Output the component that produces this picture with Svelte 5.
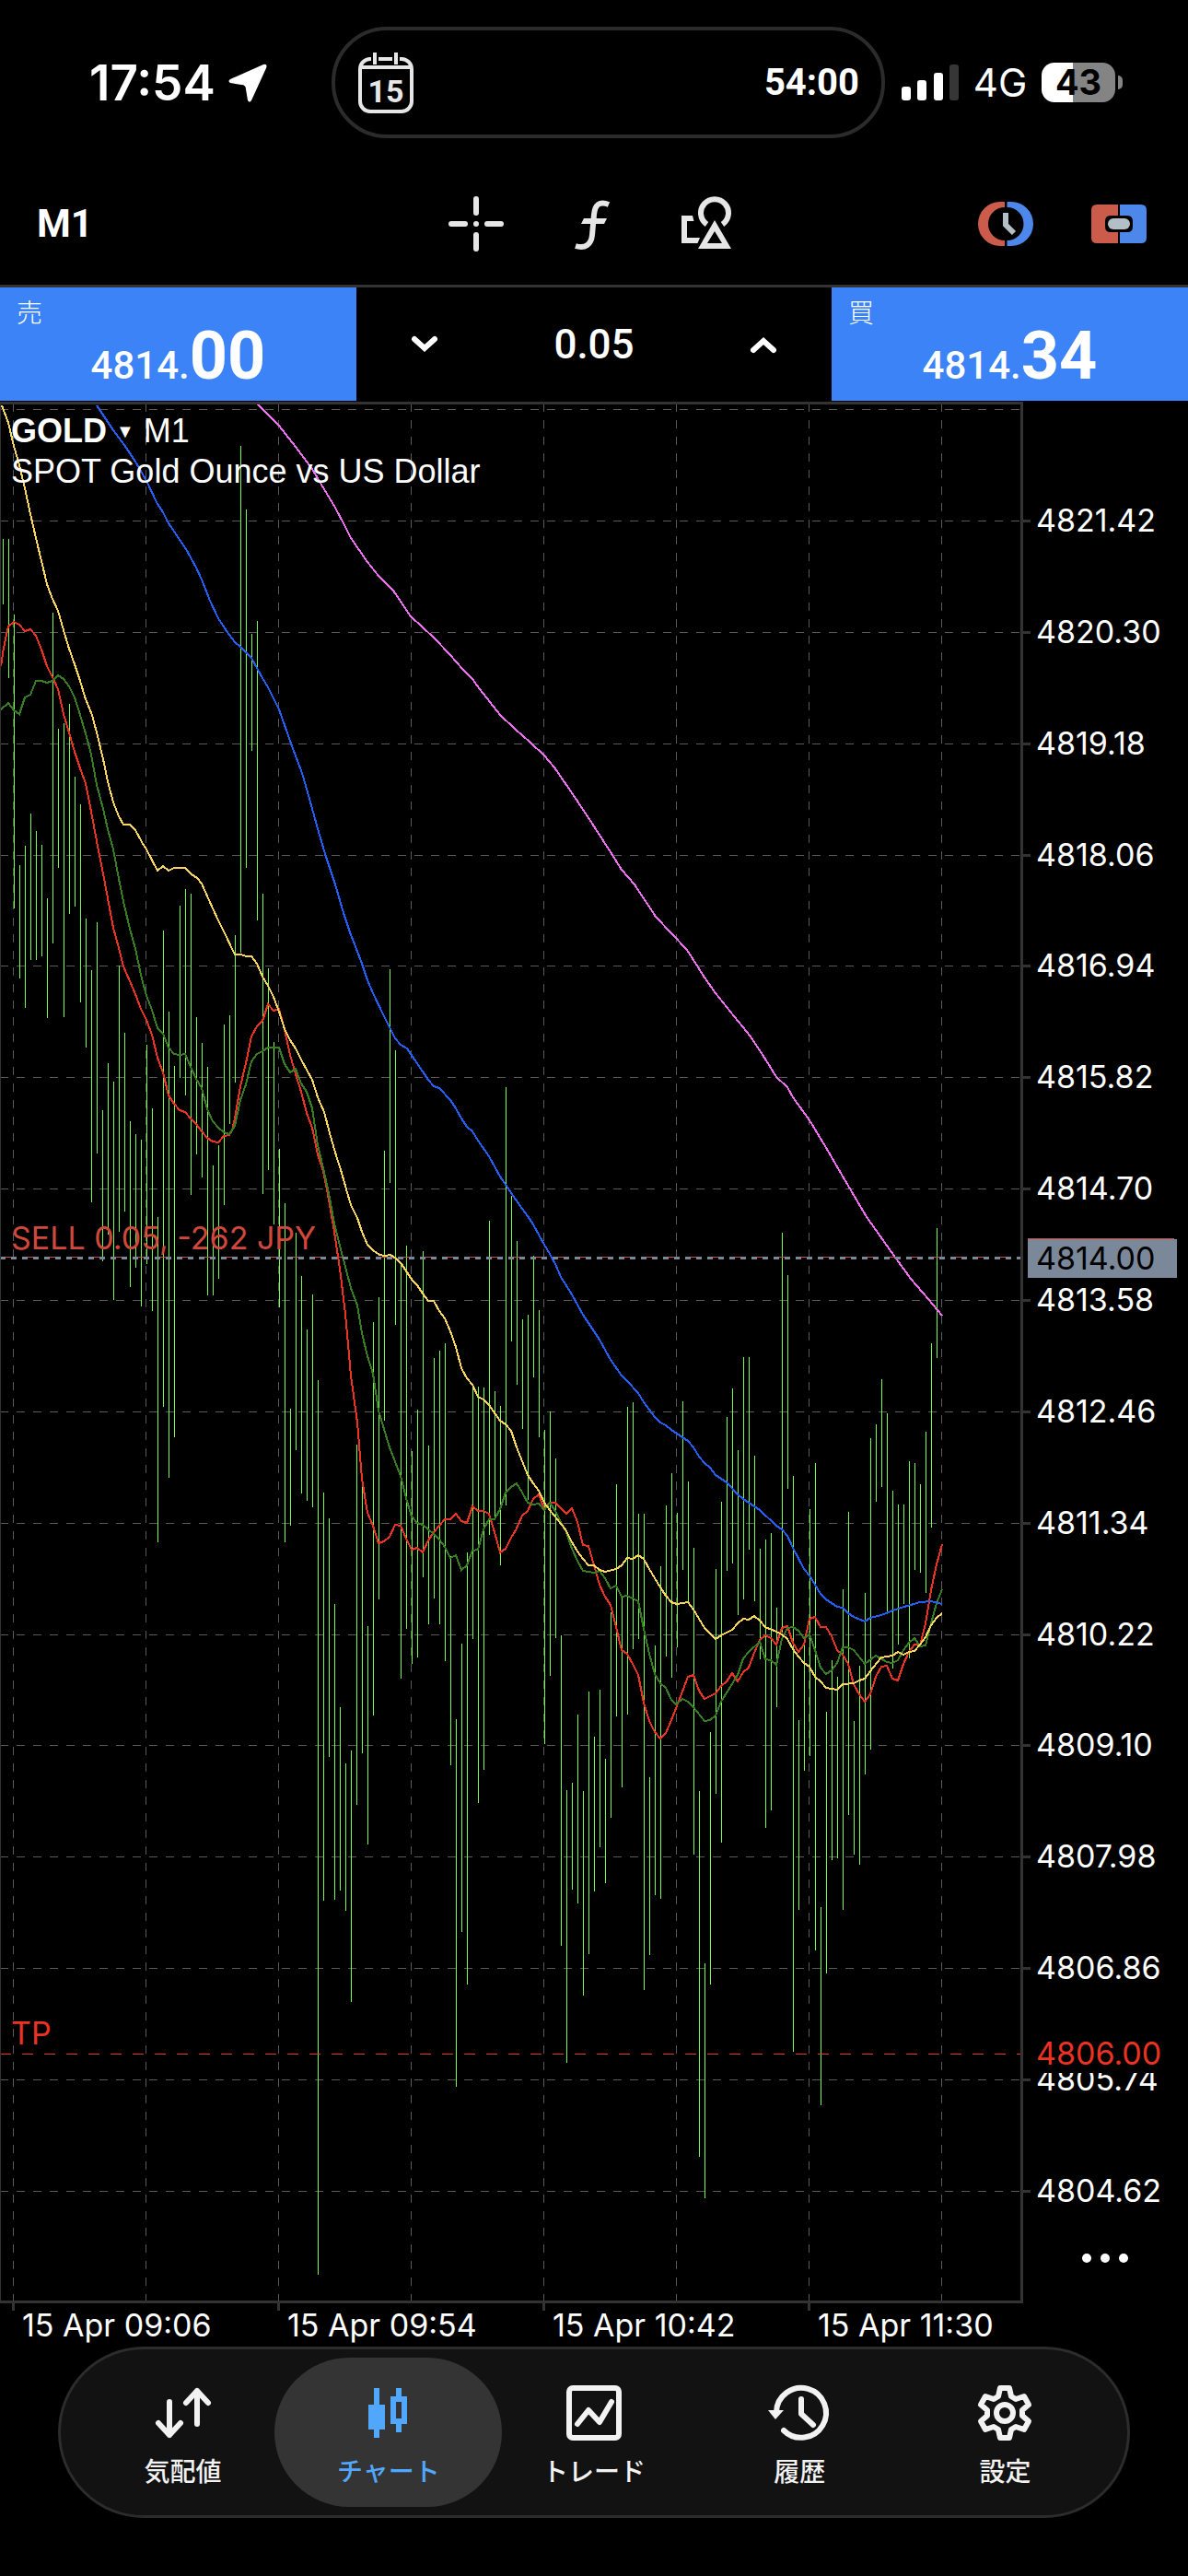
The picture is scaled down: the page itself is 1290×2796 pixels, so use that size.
<script lang="ts">
	type Overlay = { name: string; points: string };
	type Tab = { id: string; label: string };

	const tabs: Tab[] = [
		{ id: 'quotes', label: '気配値' },
		{ id: 'chart', label: 'チャート' },
		{ id: 'trade', label: 'トレード' },
		{ id: 'history', label: '履歴' },
		{ id: 'settings', label: '設定' }
	];

	let activeTab = $state('chart');
	let volume = $state(0.05);

	function step(delta: number) {
		volume = Math.max(0.01, volume + delta);
	}

	// price scale, top to bottom
	const prices = [
		'4821.42', '4820.30', '4819.18', '4818.06', '4816.94', '4815.82', '4814.70', '4813.58',
		'4812.46', '4811.34', '4810.22', '4809.10', '4807.98', '4806.86', '4805.74', '4804.62'
	];
	const priceY = (i: number) => Math.round(565 + i * 120.85);
	const rows = [444, ...prices.map((_, i) => priceY(i))];

	// time scale, one grid line per 24 minutes
	const columns = [14, 158, 302, 446, 590, 734, 878, 1022];
	const times = ['15 Apr 09:06', '15 Apr 09:54', '15 Apr 10:42', '15 Apr 11:30'];

	// high / low of every minute
	const bars = [
		[585, 656], [585, 736], [667, 986], [939, 1062], [918, 1094], [883, 1042], [902, 1042], [917, 1038],
		[975, 1105], [665, 1024], [791, 942], [785, 1104], [764, 992], [843, 984], [873, 1088], [997, 1137],
		[1053, 1305], [1001, 1252], [1205, 1369], [1154, 1340], [1174, 1411], [1048, 1337], [1121, 1315], [1217, 1397],
		[1231, 1376], [1237, 1418], [1134, 1372], [1203, 1423], [1321, 1674], [1010, 1527], [1098, 1604], [1157, 1560],
		[983, 1170], [965, 1189], [970, 1297], [1104, 1253], [1132, 1278], [1158, 1406], [1265, 1406], [1243, 1388],
		[1112, 1308], [1102, 1220], [1015, 1175], [484, 1034], [553, 942], [688, 815], [674, 999], [970, 1296],
		[1051, 1270], [1131, 1329], [1247, 1419], [1306, 1674], [1529, 1656], [1338, 1574], [1385, 1621], [1443, 1629],
		[1405, 1636], [1498, 2469], [1620, 2063], [1648, 1907], [1741, 2062], [1853, 2052], [1914, 2074], [1900, 2173],
		[1568, 1959], [1610, 1903], [1765, 2002], [1435, 1862], [1408, 1736], [1249, 1542], [1052, 1284], [1140, 1438],
		[1371, 1822], [1352, 1768], [1575, 1806], [1530, 1799], [1358, 1712], [1569, 1763], [1474, 1735], [1466, 1763],
		[1458, 1803], [1689, 1916], [1866, 2265], [1784, 2097], [1685, 2154], [1504, 1779], [1505, 1957], [1506, 1921],
		[1325, 1666], [1510, 1650], [1526, 1699], [1180, 1634], [1298, 1456], [1347, 1503], [1432, 1551], [1427, 1628],
		[1363, 1495], [1422, 1560], [1552, 1893], [1532, 1819], [1583, 1778], [1775, 2112], [1943, 2239], [1935, 2051],
		[1861, 2066], [1944, 2166], [1836, 2121], [1885, 2053], [1834, 2005], [1909, 2044], [1750, 1973], [1611, 1863],
		[1733, 1940], [1527, 1861], [1522, 1790], [1643, 1779], [1643, 2160], [1929, 2122], [1786, 2057], [1700, 2061],
		[1634, 1798], [1599, 1821], [1642, 1788], [1521, 1704], [1608, 1738], [1680, 2013], [1944, 2341], [2131, 2386],
		[1880, 2154], [1703, 1947], [1630, 2000], [1538, 1705], [1507, 1697], [1574, 1753], [1473, 1736], [1473, 1682],
		[1580, 1738], [1681, 1801], [1671, 1984], [1664, 1965], [1745, 1853], [1338, 1772], [1384, 1616], [1602, 2227],
		[1867, 2073], [1786, 1922], [1638, 1906], [1588, 2117], [2070, 2285], [1858, 2142], [1802, 2019], [1820, 2017],
		[1725, 2073], [1641, 1970], [1868, 2013], [1808, 2024], [1729, 1926], [1561, 1899], [1546, 1630], [1497, 1614],
		[1534, 1750], [1618, 1811], [1633, 1785], [1633, 1741], [1586, 1800], [1588, 1704], [1611, 1707], [1554, 1729],
		[1458, 1658], [1333, 1474]
	];

	const overlays: Overlay[] = [
		{
			name: 'fast',
			points:
				'1,723 4,703 9,680 15,675 21,678 27,685 33,683 39,690 45,705 51,723 57,735 63,748 69,775 75,795 81,816 87,834 93,850 99,881 105,913 112,948 117,975 123,1007 129,1029 134,1049 141,1065 147,1079 153,1095 159,1107 165,1123 171,1148 177,1164 183,1189 189,1198 195,1205 201,1207 207,1214 213,1220 219,1228 225,1235 231,1239 237,1240 243,1233 249,1232 252,1227 255,1214 261,1179 267,1154 273,1125 279,1114 285,1108 291,1090 297,1097 303,1095 309,1118 315,1145 321,1166 327,1185 333,1208 339,1224 345,1253 351,1271 357,1302 363,1337 369,1377 375,1426 381,1493 388,1544 393,1605 399,1642 405,1656 411,1675 417,1673 423,1668 429,1655 435,1656 441,1670 447,1682 453,1680 459,1685 465,1672 471,1663 477,1656 483,1649 489,1649 495,1643 501,1651 507,1653 513,1635 519,1640 525,1640 531,1643 537,1663 543,1685 549,1681 555,1669 560,1661 567,1645 573,1640 579,1627 585,1622 591,1638 597,1631 603,1631 609,1637 615,1643 621,1637 627,1652 633,1677 639,1678 645,1699 651,1720 657,1733 663,1742 669,1766 675,1791 681,1795 687,1806 693,1818 699,1848 705,1868 711,1880 717,1887 723,1881 729,1867 741,1836 747,1820 753,1818 759,1835 765,1844 771,1841 777,1838 783,1830 789,1825 795,1816 801,1825 807,1815 813,1810 819,1794 825,1780 831,1775 837,1778 843,1785 849,1767 855,1765 861,1783 867,1793 873,1785 879,1757 885,1755 891,1766 897,1766 903,1776 909,1791 915,1796 921,1806 927,1828 933,1839 939,1847 945,1839 951,1820 957,1809 963,1808 969,1822 975,1824 981,1806 987,1793 993,1785 999,1786 1005,1762 1011,1726 1017,1698 1023,1676'
		},
		{
			name: 'second',
			points:
				'1,770 9,763 15,771 21,775 27,757 33,754 39,739 45,739 51,741 57,739 63,733 69,737 75,745 81,757 87,776 93,796 99,819 105,852 112,878 117,900 123,922 129,954 135,983 141,1008 147,1030 153,1058 159,1081 165,1096 171,1116 177,1122 183,1137 189,1144 195,1145 201,1144 207,1158 213,1171 219,1181 225,1204 231,1217 237,1224 243,1229 249,1231 255,1222 261,1194 267,1177 273,1152 279,1144 285,1141 291,1137 303,1137 309,1155 315,1164 321,1160 327,1176 333,1185 339,1203 345,1243 351,1268 357,1295 363,1328 369,1352 375,1375 381,1398 388,1417 393,1447 399,1472 405,1491 411,1531 417,1551 423,1571 435,1602 441,1626 447,1646 453,1653 459,1655 471,1665 477,1671 483,1679 489,1691 495,1688 501,1704 507,1699 513,1683 519,1682 525,1660 531,1649 537,1649 543,1638 549,1620 555,1614 561,1610 567,1620 573,1631 579,1633 585,1632 591,1639 597,1631 603,1640 609,1652 615,1663 621,1681 627,1694 633,1705 645,1707 651,1705 657,1713 663,1724 669,1721 675,1733 681,1732 693,1738 699,1768 705,1795 711,1817 717,1827 723,1832 729,1845 734,1850 741,1844 747,1847 753,1853 765,1868 771,1867 777,1862 783,1847 801,1818 807,1800 813,1793 825,1782 831,1801 837,1802 843,1807 849,1779 855,1767 861,1766 867,1770 873,1778 879,1774 885,1791 891,1810 897,1817 903,1813 909,1805 915,1788 921,1788 927,1791 939,1806 951,1797 963,1804 969,1805 975,1802 981,1791 987,1783 993,1778 999,1787 1005,1786 1011,1762 1017,1740 1023,1725'
		},
		{
			name: 'middle',
			points:
				'2,440 9,459 15,484 21,505 27,530 33,558 39,584 45,609 51,634 57,650 63,663 69,684 75,704 81,721 87,739 93,759 100,776 106,799 112,824 117,848 123,871 129,886 134,895 141,895 147,901 154,914 159,922 171,945 177,940 183,945 189,942 201,942 208,949 214,953 219,959 226,975 237,999 246,1017 252,1030 255,1036 261,1036 268,1038 273,1038 279,1046 285,1060 291,1070 297,1082 303,1098 309,1117 315,1129 321,1138 328,1152 339,1172 345,1191 352,1207 358,1230 364,1251 371,1273 376,1291 381,1308 388,1322 393,1337 399,1351 405,1357 412,1362 418,1363 424,1362 430,1366 436,1372 442,1381 448,1390 453,1395 459,1404 465,1412 471,1412 477,1423 483,1431 489,1445 495,1462 501,1485 507,1496 513,1503 519,1516 525,1519 531,1525 543,1542 549,1546 555,1553 561,1571 567,1586 573,1601 579,1610 585,1618 591,1631 597,1639 609,1654 614,1660 620,1672 627,1684 633,1692 639,1699 645,1699 651,1704 657,1706 669,1703 675,1699 681,1691 687,1692 693,1688 699,1692 705,1703 717,1723 723,1732 729,1739 735,1741 741,1740 747,1739 753,1747 765,1767 771,1773 777,1779 783,1775 789,1772 795,1769 801,1762 807,1757 813,1758 819,1754 825,1759 831,1766 843,1771 849,1774 855,1779 861,1790 867,1798 873,1805 879,1809 885,1820 891,1825 897,1832 909,1834 915,1828 927,1827 933,1824 939,1822 945,1814 957,1799 969,1797 975,1793 981,1796 987,1793 993,1792 999,1785 1005,1777 1011,1764 1017,1756 1023,1751'
		},
		{
			name: 'slow',
			points:
				'105,440 123,467 135,483 147,501 159,522 171,547 177,556 183,568 202,596 213,616 219,629 228,652 237,671 246,685 255,697 261,702 273,714 279,725 285,736 291,746 297,758 303,770 316,807 328,839 336,867 346,903 353,927 364,960 373,991 380,1012 387,1030 393,1046 399,1064 405,1078 417,1103 424,1117 429,1127 435,1134 442,1138 448,1147 459,1163 465,1172 471,1179 477,1181 489,1194 495,1203 501,1214 507,1223 513,1228 519,1238 531,1255 543,1277 560,1302 567,1312 573,1320 579,1329 585,1340 591,1351 597,1361 603,1372 609,1386 621,1405 633,1427 651,1454 663,1476 675,1493 681,1499 693,1512 699,1522 711,1538 717,1544 723,1547 729,1552 741,1560 747,1564 753,1571 759,1581 765,1588 771,1593 777,1601 783,1605 789,1609 801,1622 807,1627 825,1639 843,1656 849,1660 855,1667 861,1680 873,1703 879,1710 891,1730 897,1736 909,1744 915,1745 921,1751 927,1755 939,1760 945,1756 957,1753 975,1746 999,1739 1011,1738 1023,1741'
		},
		{
			name: 'slowest',
			points:
				'280,439 303,462 321,485 339,509 352,531 364,551 373,568 381,584 399,610 411,625 427,641 446,669 471,692 489,711 502,726 513,737 521,748 543,776 559,791 576,806 591,820 602,833 626,868 645,897 665,928 675,944 689,960 712,995 746,1031 765,1061 777,1078 793,1098 815,1125 832,1151 843,1169 855,1180 861,1191 879,1216 896,1244 914,1275 941,1321 973,1366 989,1388 1008,1410 1023,1428'
		}
	];
</script>

<div class="app">
	<header class="status">
		<div class="clock">
			<span>17:54</span>
			<svg viewBox="0 0 42 42" width="42" height="42" aria-hidden="true">
				<path d="M38 1 2 17Q-1 19 2 21L14 23Q19 23 19 28L21 40Q23 43 25 40L41 5Q43 0 38 1Z" fill="#fff" />
			</svg>
		</div>
		<div class="island">
			<svg viewBox="0 0 60 66" width="60" height="66" aria-hidden="true">
				<rect x="2" y="7" width="56" height="57" rx="11" fill="none" stroke="#e6e6e6" stroke-width="4" />
				<path d="M3 16H57" stroke="#e6e6e6" stroke-width="4" />
				<path d="M18 0V13M41 0V13" stroke="#000" stroke-width="8" />
				<path d="M18 0V13M41 0V13" stroke="#e6e6e6" stroke-width="4" />
				<text x="30" y="54" text-anchor="middle">15</text>
			</svg>
			<span>54:00</span>
		</div>
		<div class="network">
			<svg viewBox="0 0 62 39" width="62" height="39" aria-hidden="true">
				<rect x="0" y="24" width="10" height="15" rx="3" fill="#fff" />
				<rect x="17" y="17" width="10" height="22" rx="3" fill="#fff" />
				<rect x="35" y="9" width="10" height="30" rx="3" fill="#fff" />
				<rect x="52" y="0" width="10" height="39" rx="3" fill="#363636" />
			</svg>
			<span>4G</span>
			<div class="battery"><b>43</b></div>
		</div>
	</header>

	<div class="toolbar">
		<button class="timeframe">M1</button>
		<div class="tools">
			<button aria-label="Crosshair">
				<svg viewBox="0 0 60 60" width="60" height="60" stroke="#e6e6e6" stroke-width="6" stroke-linecap="round">
					<path d="M30 3V18M30 42V57M3 30H18M42 30H57M30 30V30" />
				</svg>
			</button>
			<button aria-label="Indicators">
				<svg viewBox="0 0 60 60" width="60" height="60">
					<path d="M48 9C38 5 33 9 32 20L30 42C29 53 22 57 12 54" fill="none" stroke="#e6e6e6" stroke-width="6" />
					<path d="M21 24H46L43 30H18Z" fill="#e6e6e6" />
				</svg>
			</button>
			<button aria-label="Objects">
				<svg viewBox="0 0 60 60" width="60" height="60" fill="#e6e6e6">
					<path d="M28.5 30.5A15 15 0 1 1 45.5 30.5" fill="none" stroke="#e6e6e6" stroke-width="6" />
					<path d="M37 26 55 57H19ZM37 38 29 51H45Z" fill-rule="evenodd" />
					<path d="M1 21H13L14.5 27H7V45H21L18.5 51H1Z" />
				</svg>
			</button>
		</div>
		<div class="extras">
			<button aria-label="Pending order">
				<svg viewBox="0 0 60 60" width="60" height="60">
					<path d="M29 6H24A24 24 0 0 0 24 54H29V48A18 18 0 0 1 29 12Z" fill="#cb5b4b" />
					<path d="M31.5 6H36A24 24 0 0 1 36 54H31.5V48A18 18 0 0 0 31.5 12Z" fill="#4c87e9" />
					<path d="M30 18V31L39 40" fill="none" stroke="#b2bfc6" stroke-width="6" />
				</svg>
			</button>
			<button aria-label="One click trading">
				<svg viewBox="0 0 60 60" width="60" height="60">
					<path d="M29 9H6Q0 9 0 15V45Q0 51 6 51H29V39H21Q15 39 15 33V27Q15 21 21 21H29Z" fill="#cb5b4b" />
					<path d="M31 9H54Q60 9 60 15V45Q60 51 54 51H31V39H39Q45 39 45 33V27Q45 21 39 21H31Z" fill="#4c87e9" />
					<rect x="18" y="24" width="24" height="12" rx="6" fill="#b2bfc6" />
				</svg>
			</button>
		</div>
	</div>

	<div class="trade">
		<button class="deal">
			<span class="side">売</span>
			<span class="price">4814.<b>00</b></span>
		</button>
		<div class="volume">
			<button aria-label="Decrease volume" onclick={() => step(-0.01)}>
				<svg viewBox="0 0 28 18" width="28" height="18"><path d="M3 3 14 13 25 3" /></svg>
			</button>
			<span>{volume.toFixed(2)}</span>
			<button aria-label="Increase volume" onclick={() => step(0.01)}>
				<svg viewBox="0 0 28 18" width="28" height="18"><path d="M3 15 14 5 25 15" /></svg>
			</button>
		</div>
		<button class="deal">
			<span class="side">買</span>
			<span class="price">4814.<b>34</b></span>
		</button>
	</div>

	<main class="chart">
		<svg class="plot" viewBox="0 436 1290 2111" role="img" aria-label="GOLD M1">
			<g class="grid">
				{#each rows as y}
					<path d="M0 {y}H1108" />
				{/each}
				{#each columns as x}
					<path d="M{x} 438V2497" />
				{/each}
			</g>

			<g class="bars">
				{#each bars as [high, low], i}
					<rect x={3 + i * 6} y={high} width="1" height={low - high} />
				{/each}
			</g>

			{#each overlays as { name, points }}
				<polyline class="average {name}" {points} />
			{/each}

			<g class="levels">
				<path class="order" d="M0 1364H1108" />
				<path class="bid" d="M0 1365H1108" />
				<path class="target" d="M0 2229H1108" />
			</g>
			<text class="position" x="12" y="1356">SELL 0.05, -262 JPY</text>
			<text class="goal" x="12" y="2219">TP</text>

			<g class="frame">
				<rect x="0" y="436" width="1111" height="3" />
				<rect x="0" y="436" width="1" height="2063" />
				<rect x="1108" y="436" width="3" height="2064" />
				<rect x="0" y="2497" width="1111" height="3" />
				{#each prices as _, i}
					<rect x="1111" y={priceY(i) - 1} width="8" height="3" />
				{/each}
				{#each times as _, i}
					<rect x={13 + i * 288} y="2500" width="3" height="8" />
				{/each}
			</g>

			{#each prices as price, i}
				<text x="1125" y={priceY(i) + 12}>{price}</text>
			{/each}
			{#each times as time, i}
				<text x={24 + i * 288} y="2536">{time}</text>
			{/each}

			<rect x="1120" y="2212" width="160" height="38" fill="#000" />
			<text class="goal" x="1125" y="2241">4806.00</text>
			<rect x="1116" y="1344" width="159" height="2" fill="#d0483c" />
			<rect x="1116" y="1345" width="162" height="42" fill="#7b8899" />
			<text class="current" x="1125" y="1378">4814.00</text>
		</svg>

		<div class="title">
			<button><b>GOLD</b><i>▼</i>M1</button>
			<p>SPOT Gold Ounce vs US Dollar</p>
		</div>
		<button class="more" aria-label="More">
			<svg viewBox="0 0 52 12" width="52" height="12" fill="#fff">
				<circle cx="6" cy="6" r="5" />
				<circle cx="26" cy="6" r="5" />
				<circle cx="46" cy="6" r="5" />
			</svg>
		</button>
	</main>

	<nav class="tabs">
		{#each tabs as tab}
			<button class:active={tab.id === activeTab} onclick={() => (activeTab = tab.id)}>
				<svg viewBox="0 0 60 60" width="60" height="60" aria-hidden="true">
					{#if tab.id === 'quotes'}
						<path class="line" d="M15 18V54M3 41 15 54 27 41M45 42V6M33 19 45 6 57 19" />
					{:else if tab.id === 'chart'}
						<path d="M8 21H14V3H20V21H26V48H20V57H14V48H8Z" />
						<path
							d="M32 12H38V3H44V12H50V42H44V51H38V42H32ZM38 18V36H44V18Z"
							fill-rule="evenodd"
						/>
					{:else if tab.id === 'trade'}
						<rect class="line" x="3" y="3" width="54" height="54" rx="4" />
						<path class="line" d="M12 42 24 27 36 40 49 18" />
					{:else if tab.id === 'history'}
						<path class="line" d="M5 29A27 27 0 1 1 13 49M32 15V31L45 43" />
						<path d="M-4 27H13L4 37Z" />
					{:else}
						<path
							class="line"
							d="M25 3H35L37 12 42 15 51 12 56 21 49 27V33L56 39 51 48 42 45 37 48 35 57H25L23 48 18 45 9 48 4 39 11 33V27L4 21 9 12 18 15 23 12Z"
						/>
						<circle class="line" cx="30" cy="30" r="9" />
					{/if}
				</svg>
				<span>{tab.label}</span>
			</button>
		{/each}
	</nav>
</div>

<style>
	:global(body) {
		background: #000;
	}

	.app {
		display: flex;
		flex-direction: column;
		color: #fff;
		font-family: Inter, 'Noto Sans CJK JP', sans-serif;
	}

	button {
		padding: 0;
		border: 0;
		background: none;
		color: inherit;
		font: inherit;
		cursor: pointer;
	}

	svg {
		display: block;
		overflow: visible;
	}

	.status {
		display: flex;
		align-items: center;
		gap: 18px;
		padding: 29px 71px 0 97px;
	}

	.clock {
		flex: 1;
		display: flex;
		align-items: center;
		gap: 14px;
		margin-right: -18px;
		font-size: 53px;
		line-height: 60px;
		font-weight: 600;
	}

	.island {
		display: flex;
		align-items: center;
		justify-content: space-between;
		box-sizing: border-box;
		width: 601px;
		height: 121px;
		padding: 0 24px 0 25px;
		border: 4px solid #2b2b2b;
		border-radius: 60px;
		font-family: Roboto, sans-serif;
		font-size: 40px;
		font-weight: 700;
	}

	.island text {
		fill: #e6e6e6;
		font-size: 34px;
	}

	.network {
		display: flex;
		align-items: center;
		justify-content: space-between;
		width: 240px;
		font-size: 42px;
	}

	.battery {
		position: relative;
		display: grid;
		place-items: center;
		width: 80px;
		height: 43px;
		margin-right: 8px;
		border-radius: 14px;
		background: linear-gradient(90deg, #fff 43%, #848484 43%);
		color: #000;
		font-size: 38px;
		line-height: 43px;
	}

	.battery::after {
		content: '';
		position: absolute;
		right: -8px;
		width: 5px;
		height: 15px;
		border-radius: 0 6px 6px 0;
		background: #848484;
	}

	.toolbar {
		display: grid;
		grid-template-columns: 1fr auto 1fr;
		align-items: center;
		padding: 63px 45px 36px 40px;
	}

	.timeframe {
		justify-self: start;
		font-family: Roboto, sans-serif;
		font-size: 42px;
		line-height: 60px;
		font-weight: 700;
	}

	.tools {
		display: flex;
		gap: 66px;
	}

	.extras {
		justify-self: end;
		display: flex;
		gap: 63px;
	}

	.trade {
		display: grid;
		grid-template-columns: 3fr 4fr 3fr;
		height: 123px;
		border-top: 3px solid #333;
		margin-bottom: 1px;
	}

	.deal {
		display: flex;
		flex-direction: column;
		background: #3c83f7;
	}

	.side {
		align-self: flex-start;
		padding: 10px 0 0 18px;
		font-size: 28px;
		line-height: 36px;
		font-weight: 300;
	}

	.price {
		align-self: center;
		font-family: Roboto, sans-serif;
		font-size: 42px;
		line-height: 58px;
		font-weight: 500;
	}

	.price b {
		font-size: 72px;
	}

	.volume {
		display: flex;
		align-items: center;
		justify-content: space-between;
		padding: 0 60px;
		font-family: Roboto, sans-serif;
		font-size: 44px;
		font-weight: 500;
	}

	.volume path {
		fill: none;
		stroke: #fff;
		stroke-width: 6;
		stroke-linecap: round;
	}

	.chart {
		position: relative;
	}

	.plot {
		width: 100%;
		height: auto;
	}

	.plot text {
		fill: #fff;
		font-size: 34px;
	}

	.grid path {
		fill: none;
		stroke: #5a5a5a;
		stroke-dasharray: 9 9;
		shape-rendering: crispEdges;
	}

	.bars {
		fill: #75fb4c;
		shape-rendering: crispEdges;
	}

	.average {
		fill: none;
		stroke-width: 2;
		shape-rendering: crispEdges;
	}

	.fast {
		stroke: #eb3223;
	}

	.second {
		stroke: #377d22;
	}

	.middle {
		stroke: #f9d65c;
	}

	.slow {
		stroke: #245ff5;
	}

	.slowest {
		stroke: #ee6ff0;
	}

	.levels path {
		shape-rendering: crispEdges;
	}

	.order {
		stroke: #d0483c;
		stroke-dasharray: 12 12;
	}

	.bid {
		stroke: #7b8899;
		stroke-width: 3;
		stroke-dasharray: 6 6;
	}

	.target {
		stroke: #eb3223;
		stroke-dasharray: 12 12;
	}

	.plot .position {
		fill: #d0483c;
	}

	.plot .goal {
		fill: #eb3223;
	}

	.plot .current {
		fill: #000;
	}

	.frame {
		fill: #333;
	}

	.title {
		position: absolute;
		top: 10px;
		left: 12px;
		font-family: 'Liberation Sans', sans-serif;
		font-size: 36px;
		line-height: 44px;
	}

	.title button {
		display: flex;
		align-items: center;
		gap: 10px;
		height: 44px;
	}

	.title i {
		font-size: 20px;
		font-style: normal;
	}

	.title p {
		margin: 0;
	}

	.more {
		position: absolute;
		right: 64px;
		bottom: 90px;
	}

	.tabs {
		display: flex;
		box-sizing: border-box;
		margin: 0 63px 63px;
		padding: 9px 21px;
		border: 3px solid #2c2c2c;
		border-radius: 93px;
		background: #121212;
	}

	.tabs button {
		flex: 1;
		display: flex;
		flex-direction: column;
		align-items: center;
		gap: 14px;
		margin: 0 -12px;
		padding: 30px 0 18px;
		border-radius: 81px;
		color: #f2f2f2;
		fill: currentColor;
		font-size: 28px;
		line-height: 40px;
		font-weight: 500;
	}

	.tabs .active {
		background: #343434;
		color: #50a7fb;
	}

	.line {
		fill: none;
		stroke: currentColor;
		stroke-width: 6;
		stroke-linejoin: round;
		stroke-linecap: round;
	}
</style>
